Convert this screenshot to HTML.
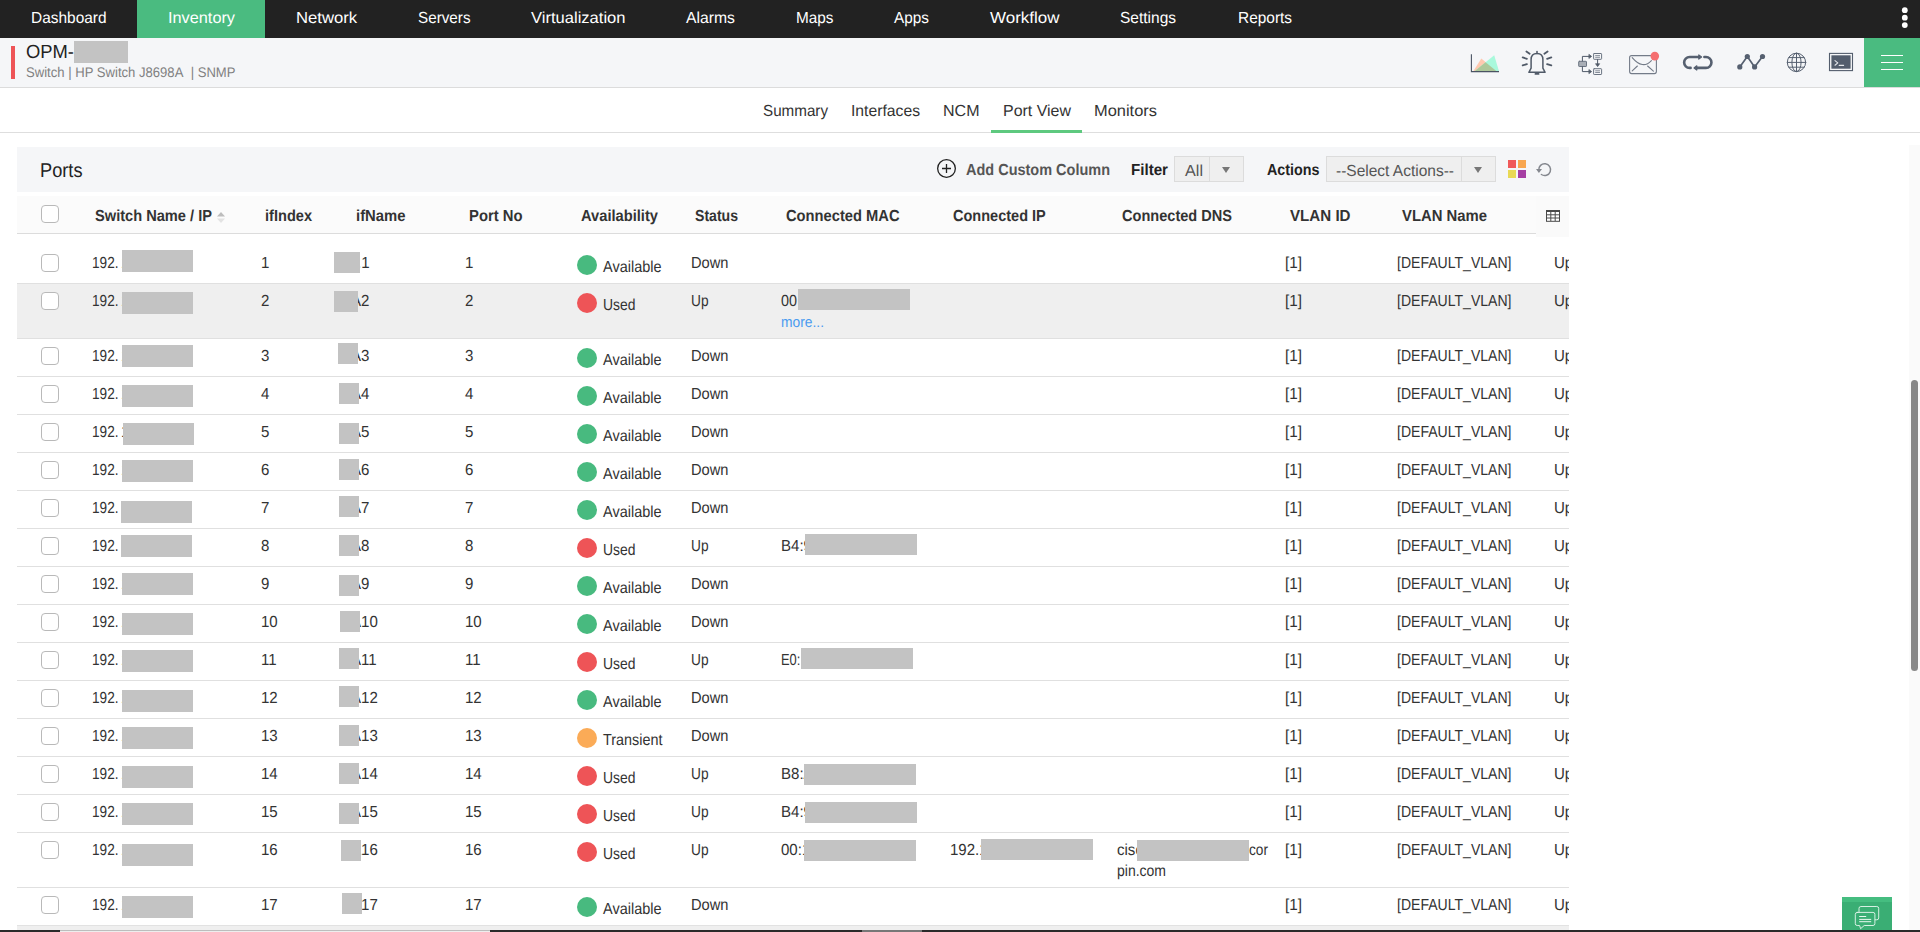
<!DOCTYPE html>
<html lang="en">
<head>
<meta charset="utf-8">
<title>OpManager - Port View</title>
<style>
html,body{margin:0;padding:0;}
body{width:1920px;height:932px;overflow:hidden;position:relative;background:#fff;
 font-family:"Liberation Sans",sans-serif;color:#333;font-size:15px;}
span,div,a,b{white-space:nowrap;}
.abs span,.abs a,.abs b{position:absolute;transform-origin:0 0;}
#topnav{position:absolute;left:0;top:0;width:1920px;height:38px;background:#222;color:#fff;}
#topnav .active{position:absolute;left:137px;top:0;width:128px;height:38px;background:#4abb80;}
#devhead{position:absolute;left:0;top:38px;width:1920px;height:49px;background:#f5f6f8;border-bottom:1px solid #dcdcdc;}
#devhead .sev{position:absolute;left:11px;top:8px;width:4px;height:33px;background:#ee5457;}
#devhead .burger{position:absolute;left:1864px;top:0;width:56px;height:49px;background:#4abb80;}
#devhead .burger i{position:absolute;left:17px;width:22px;height:1px;background:#fff;}
#tabs{position:absolute;left:0;top:88px;width:1920px;height:44px;border-bottom:1px solid #dedede;background:#fff;}
#tabs .sel{position:absolute;left:991px;top:42px;width:91px;height:3px;background:#5ec97f;}
#panel{position:absolute;left:17px;top:147px;width:1552px;height:785px;overflow:hidden;}
#phead{position:absolute;left:0;top:0;width:1552px;height:45px;background:#f5f6f8;}
#thead{position:absolute;left:0;top:49px;width:1552px;height:37px;background:#fbfbfb;}
#thead .line{position:absolute;left:0;top:37px;width:1519px;height:1px;background:#dcdcdc;}
#thead .corner{position:absolute;left:1519px;top:0;width:33px;height:41px;background:#fafafa;}
.row{position:absolute;left:0;width:1552px;border-bottom:1px solid #e0e0e0;}
.row.hl{background:#efefef;}
.cb{position:absolute;left:24px;width:16px;height:16px;border:1px solid #b9b9b9;border-radius:4px;background:#fff;}
.dot{position:absolute;left:560px;width:20px;height:20px;border-radius:50%;}
.g{background:#48ba7f;} .r{background:#ee5457;} .o{background:#fbab57;}
.mask{position:absolute;background:#c3c3c3;}
.sel-box{position:absolute;height:24px;border:1px solid #dcdcdc;background:#efefef;}
.sel-box i{position:absolute;top:0;width:1px;height:24px;background:#dcdcdc;}
.sel-box u{position:absolute;top:10px;width:0;height:0;border-left:4.5px solid transparent;border-right:4.5px solid transparent;border-top:6px solid #777;}
#vscroll{position:absolute;left:1909px;top:145px;width:11px;height:787px;background:#fafafa;}
#vscroll i{position:absolute;left:2px;top:235px;width:7px;height:291px;border-radius:4px;background:#888;}
#chat{position:absolute;left:1842px;top:897px;width:50px;height:35px;background:#3aae74;}
#foot{position:absolute;left:0;top:930px;width:1920px;height:2px;background:#2a2a2a;}
#foot i{position:absolute;top:0;height:2px;background:#cfcfcf;}
#hbar{position:absolute;left:17px;top:925px;width:1552px;height:5px;background:#efefef;border-top:1px solid #e2e2e2;box-sizing:border-box;}
svg{position:absolute;overflow:visible;}
</style>
</head>
<body>

<div id="topnav" class="abs"><div class="active"></div>
<span style="left:31.00px;top:8.00px;font-size:16px;line-height:20px;transform:matrix(0.9649,0,0.0005,1,0,0);color:#fff;">Dashboard</span>
<span style="left:168.00px;top:8.00px;font-size:16px;line-height:20px;transform:matrix(1.0180,0,0.0005,1,0,0);color:#fff;">Inventory</span>
<span style="left:295.75px;top:8.00px;font-size:16px;line-height:20px;transform:matrix(1.0426,0,0.0005,1,0,0);color:#fff;">Network</span>
<span style="left:417.50px;top:8.00px;font-size:16px;line-height:20px;transform:matrix(0.9524,0,0.0005,1,0,0);color:#fff;">Servers</span>
<span style="left:530.50px;top:8.00px;font-size:16px;line-height:20px;transform:matrix(1.0349,0,0.0005,1,0,0);color:#fff;">Virtualization</span>
<span style="left:685.50px;top:8.00px;font-size:16px;line-height:20px;transform:matrix(0.9837,0,0.0005,1,0,0);color:#fff;">Alarms</span>
<span style="left:795.50px;top:8.00px;font-size:16px;line-height:20px;transform:matrix(0.9585,0,0.0005,1,0,0);color:#fff;">Maps</span>
<span style="left:894.00px;top:8.00px;font-size:16px;line-height:20px;transform:matrix(0.9589,0,0.0005,1,0,0);color:#fff;">Apps</span>
<span style="left:990.00px;top:8.00px;font-size:16px;line-height:20px;transform:matrix(1.0601,0,0.0005,1,0,0);color:#fff;">Workflow</span>
<span style="left:1120.00px;top:8.00px;font-size:16px;line-height:20px;transform:matrix(0.9686,0,0.0005,1,0,0);color:#fff;">Settings</span>
<span style="left:1237.50px;top:8.00px;font-size:16px;line-height:20px;transform:matrix(0.9643,0,0.0005,1,0,0);color:#fff;">Reports</span>
<svg style="left:1900px;top:6px" width="10" height="24" viewBox="0 0 10 24"><circle cx="4.8" cy="4.2" r="2.9" fill="#fff"/><circle cx="4.8" cy="11.7" r="2.9" fill="#fff"/><circle cx="4.8" cy="19.1" r="2.9" fill="#fff"/></svg>
</div>
<div id="devhead" class="abs"><div class="sev"></div>
<span style="left:26.00px;top:2.00px;font-size:19px;line-height:24px;transform:matrix(0.9673,0,0.0005,1,0,0);color:#222;">OPM-</span>
<div class="mask" style="left:74px;top:3px;width:54px;height:22px"></div>
<span style="left:26.00px;top:25.00px;font-size:14px;line-height:18px;transform:matrix(0.9347,0,0.0005,1,0,0);color:#808080;">Switch | HP Switch J8698A&nbsp; | SNMP</span>
<svg style="left:1460px;top:0" width="400" height="49" viewBox="1460 38 400 49" fill="none" stroke-linecap="round" stroke-linejoin="round">
<!-- performance chart -->
<path d="M1473.3 71.2L1481.3 58.6L1496.6 71.2z" fill="#ffc9b0"/>
<path d="M1474.6 71.2L1494.2 55.2L1499 71.2z" fill="#a9f9dc"/>
<path d="M1474.6 71.2L1485.6 62.2L1496.6 71.2z" fill="#adc89a"/>
<path d="M1471.4 54.2V71.6H1499" stroke="#4a5363" stroke-width="1.1" stroke-linecap="butt" stroke-linejoin="miter"/>
<!-- alarm bell -->
<g stroke="#505a68" stroke-width="1.5">
<path d="M1537 51.6V53.4"/>
<path d="M1528.9 72.3H1545.1L1542.9 68.2V59.6C1542.9 55.6 1540.6 53.5 1537 53.5C1533.4 53.5 1531.1 55.6 1531.1 59.6V68.2z"/>
<path d="M1535.4 73.9H1538.6" stroke-width="1.7"/>
<path stroke-width="1.8" d="M1526.4 51.5L1529.6 53.8M1522.7 57.4L1526.9 58.8M1522.7 65.4L1526.9 64.1M1547.6 51.5L1544.4 53.8M1551.3 57.4L1547.1 58.8M1551.3 65.4L1547.1 64.1"/>
</g>
<!-- workflow -->
<g stroke="#6b7482" stroke-width="1">
<rect x="1578.7" y="61.3" width="7.8" height="5.2" rx="0.6" fill="#a9aeb6"/>
<rect x="1593.6" y="53.5" width="8" height="5.8" rx="0.6"/>
<rect x="1593.6" y="68.7" width="8" height="5.8" rx="0.6"/>
<path d="M1595.6 55.6h4M1595.6 57.3h4M1595.6 70.8h4M1595.6 72.5h4" stroke-width="0.8"/>
</g>
<g stroke="#505a68" stroke-width="1">
<path d="M1582.4 61V56.4H1590M1582.4 66.8V71.6H1590M1597.6 59.6V65"/>
<path d="M1589.2 54.6L1591.6 56.4L1589.2 58.2zM1589.2 69.8L1591.6 71.6L1589.2 73.4zM1595.8 64L1597.6 66.6L1599.4 64z" fill="#505a68" stroke-width="0.8"/>
</g>
<!-- mail -->
<g stroke="#737b88" stroke-width="1.1">
<rect x="1629.6" y="55.6" width="26.8" height="18" rx="2"/>
<path d="M1632.2 57.6Q1642.8 70 1651.4 60.6M1632.2 70.8L1637.4 66M1653.4 71.2L1647.6 66"/>
</g>
<circle cx="1654.8" cy="56.1" r="4.3" fill="#f56e70"/>
<!-- loop -->
<g stroke="#566070" stroke-width="2.6">
<path d="M1690.6 67.9H1689.6A5.45 5.45 0 0 1 1689.6 57H1698.6"/>
<path d="M1704.4 57H1706A5.45 5.45 0 0 1 1706 67.9H1697"/>
<path d="M1698.8 54.9L1701.6 57L1698.8 59.1zM1696.8 65.8L1694 67.9L1696.8 70z" fill="#566070" stroke-width="1.2"/>
</g>
<!-- graph -->
<path d="M1739.8 66.9L1747.3 56.5L1754.6 66.9L1762.5 56.5" stroke="#566070" stroke-width="1.7"/>
<g fill="#566070"><circle cx="1739.8" cy="66.9" r="2.6"/><circle cx="1747.3" cy="56.5" r="2.6"/><circle cx="1754.6" cy="66.9" r="2.6"/><circle cx="1762.5" cy="56.5" r="2.6"/></g>
<!-- globe -->
<g stroke="#566070" stroke-width="1">
<circle cx="1796.5" cy="62.4" r="9.2"/>
<ellipse cx="1796.5" cy="62.4" rx="4.6" ry="9.2"/>
<path d="M1796.5 53.2V71.6M1787.3 62.4H1805.7M1788.8 57.6H1804.2M1788.8 67.2H1804.2"/>
</g>
<!-- terminal -->
<rect x="1829.5" y="53.4" width="23" height="17.2" stroke="#535d6d" stroke-width="1.1" stroke-linejoin="miter"/>
<rect x="1831.4" y="55.3" width="19.2" height="13.4" fill="#535d6d"/>
<path d="M1835 60.6L1837.8 62.9L1835 65.2M1839.2 65.4H1843.6" stroke="#e4e6ea" stroke-width="1.1"/>
</svg>

<div class="burger"><i style="top:17px"></i><i style="top:24px"></i><i style="top:31px"></i></div>
</div>
<div id="tabs" class="abs">
<span style="left:763.00px;top:13.00px;font-size:16px;line-height:20px;transform:matrix(0.9498,0,0.0005,1,0,0);color:#333;">Summary</span>
<span style="left:851.00px;top:13.00px;font-size:16px;line-height:20px;transform:matrix(0.9822,0,0.0005,1,0,0);color:#333;">Interfaces</span>
<span style="left:943.00px;top:13.00px;font-size:16px;line-height:20px;transform:matrix(1.0017,0,0.0005,1,0,0);color:#333;">NCM</span>
<span style="left:1003.00px;top:13.00px;font-size:16px;line-height:20px;transform:matrix(0.9963,0,0.0005,1,0,0);color:#333;">Port View</span>
<span style="left:1094.00px;top:13.00px;font-size:16px;line-height:20px;transform:matrix(1.0265,0,0.0005,1,0,0);color:#333;">Monitors</span>
<div class="sel"></div></div>
<div id="panel">
<div id="phead" class="abs">
<span style="left:23.00px;top:11.00px;font-size:20px;line-height:24px;transform:matrix(0.9103,0,0.0005,1,0,0);color:#222;">Ports</span>
<svg style="left:919px;top:11px" width="21" height="21" viewBox="0 0 21 21"><circle cx="10.5" cy="10.5" r="8.85" fill="none" stroke="#222" stroke-width="1.3"/><path d="M6 10.5h9M10.5 6v9" stroke="#222" stroke-width="1.3" fill="none"/></svg>
<span style="left:948.50px;top:13.00px;font-size:16px;line-height:20px;transform:matrix(0.9049,0,0.0005,1,0,0);font-weight:bold;color:#555;">Add Custom Column</span>
<span style="left:1114.00px;top:13.00px;font-size:16px;line-height:20px;transform:matrix(0.9457,0,0.0005,1,0,0);font-weight:bold;color:#222;">Filter</span>
<div class="sel-box" style="left:1157px;top:9px;width:68px"><i style="left:34px"></i><u style="left:47px"></u></div>
<span style="left:1167.50px;top:14.00px;font-size:16px;line-height:20px;transform:matrix(1.0105,0,0.0005,1,0,0);color:#555;">All</span>
<span style="left:1250.00px;top:13.00px;font-size:16px;line-height:20px;transform:matrix(0.8946,0,0.0005,1,0,0);font-weight:bold;color:#222;">Actions</span>
<div class="sel-box" style="left:1309px;top:9px;width:168px"><i style="left:134px"></i><u style="left:147px"></u></div>
<span style="left:1319.00px;top:14.00px;font-size:16px;line-height:20px;transform:matrix(0.9687,0,0.0005,1,0,0);color:#555;">--Select Actions--</span>
<svg style="left:1491px;top:13px" width="18" height="18" viewBox="0 0 18 18"><rect x="0" y="0" width="8" height="8" fill="#f0595a"/><rect x="10" y="0" width="8" height="8" fill="#f8a650"/><rect x="0" y="10" width="8" height="8" fill="#e9d956"/><rect x="10" y="10" width="8" height="8" fill="#a53fa3"/></svg>
<svg style="left:1518px;top:15px" width="18" height="16" viewBox="1535 162 18 16"><path d="M1538.8 170.2A5.9 5.9 0 1 1 1541.4 174.5" fill="none" stroke="#85888f" stroke-width="1.5" stroke-linecap="round"/><path d="M1536 169L1542 169L1538.9 172.9z" fill="#85888f"/></svg>
</div>
<div id="thead" class="abs"><div class="corner"></div><div class="line"></div>
<div class="cb" style="top:9px"></div>
<span style="left:78.00px;top:10.00px;font-size:16px;line-height:20px;transform:matrix(0.9136,0,0.0005,1,0,0);font-weight:bold;color:#333;">Switch Name / IP</span>
<span style="left:247.50px;top:10.00px;font-size:16px;line-height:20px;transform:matrix(0.9115,0,0.0005,1,0,0);font-weight:bold;color:#333;">ifIndex</span>
<span style="left:338.50px;top:10.00px;font-size:16px;line-height:20px;transform:matrix(0.9274,0,0.0005,1,0,0);font-weight:bold;color:#333;">ifName</span>
<span style="left:451.50px;top:10.00px;font-size:16px;line-height:20px;transform:matrix(0.9264,0,0.0005,1,0,0);font-weight:bold;color:#333;">Port No</span>
<span style="left:564.00px;top:10.00px;font-size:16px;line-height:20px;transform:matrix(0.9180,0,0.0005,1,0,0);font-weight:bold;color:#333;">Availability</span>
<span style="left:677.50px;top:10.00px;font-size:16px;line-height:20px;transform:matrix(0.8798,0,0.0005,1,0,0);font-weight:bold;color:#333;">Status</span>
<span style="left:768.50px;top:10.00px;font-size:16px;line-height:20px;transform:matrix(0.9186,0,0.0005,1,0,0);font-weight:bold;color:#333;">Connected MAC</span>
<span style="left:936.00px;top:10.00px;font-size:16px;line-height:20px;transform:matrix(0.9071,0,0.0005,1,0,0);font-weight:bold;color:#333;">Connected IP</span>
<span style="left:1104.50px;top:10.00px;font-size:16px;line-height:20px;transform:matrix(0.9100,0,0.0005,1,0,0);font-weight:bold;color:#333;">Connected DNS</span>
<span style="left:1272.50px;top:10.00px;font-size:16px;line-height:20px;transform:matrix(0.9453,0,0.0005,1,0,0);font-weight:bold;color:#333;">VLAN ID</span>
<span style="left:1384.50px;top:10.00px;font-size:16px;line-height:20px;transform:matrix(0.9283,0,0.0005,1,0,0);font-weight:bold;color:#333;">VLAN Name</span>
<svg style="left:200px;top:16px" width="8" height="11" viewBox="0 0 8 11"><path d="M0 4.6L4 0l4 4.6z" fill="#bdbdbd"/><path d="M0 6.4L4 11l4-4.6z" fill="#e3e3e3"/></svg>
<svg style="left:1529px;top:14px" width="14" height="12" viewBox="0 0 14 12"><rect x="0.5" y="1" width="13" height="10.3" fill="#fff" stroke="#4a4a4a" stroke-width="1"/><path d="M0 1h14" stroke="#4a4a4a" stroke-width="2"/><path d="M0.5 4.8h13M0.5 8h13M4.8 1v10M9.2 1v10" stroke="#4a4a4a" stroke-width="1" fill="none"/></svg>
</div>
<div class="row abs" style="top:87px;height:49px">
<div class="cb" style="top:20px"></div>
<span style="left:75.00px;top:19.00px;font-size:16px;line-height:20px;transform:matrix(0.8514,0,0.0005,1,0,0);">192.</span>
<span style="left:103.60px;top:19.00px;font-size:16px;line-height:20px;transform:matrix(0.9400,0,0.0005,1,0,0);">1</span>
<div class="mask" style="left:105px;top:16px;width:71px;height:22px"></div>
<span style="left:243.50px;top:19.00px;font-size:16px;line-height:20px;transform:matrix(0.9400,0,0.0005,1,0,0);">1</span>
<span style="left:339.82px;top:19.00px;font-size:16px;line-height:20px;transform:matrix(0.9400,0,0.0005,1,0,0);">.1</span>
<div class="mask" style="left:317px;top:18px;width:26px;height:21px"></div>
<span style="left:447.50px;top:19.00px;font-size:16px;line-height:20px;transform:matrix(0.9400,0,0.0005,1,0,0);">1</span>
<div class="dot g" style="top:21px"></div>
<span style="left:585.50px;top:23.00px;font-size:16px;line-height:20px;transform:matrix(0.9052,0,0.0005,1,0,0);">Available</span>
<span style="left:673.50px;top:19.00px;font-size:16px;line-height:20px;transform:matrix(0.9160,0,0.0005,1,0,0);">Down</span>
<span style="left:1268.00px;top:19.00px;font-size:16px;line-height:20px;transform:matrix(0.9544,0,0.0005,1,0,0);">[1]</span>
<span style="left:1380.00px;top:19.00px;font-size:16px;line-height:20px;transform:matrix(0.8778,0,0.0005,1,0,0);">[DEFAULT_VLAN]</span>
<span style="left:1537.00px;top:19.00px;font-size:16px;line-height:20px;transform:matrix(0.9400,0,0.0005,1,0,0);">Up</span>
</div>
<div class="row abs hl" style="top:137px;height:54px">
<div class="cb" style="top:8px"></div>
<span style="left:75.00px;top:7.00px;font-size:16px;line-height:20px;transform:matrix(0.8514,0,0.0005,1,0,0);">192.</span>
<span style="left:103.60px;top:7.00px;font-size:16px;line-height:20px;transform:matrix(0.9400,0,0.0005,1,0,0);">1</span>
<div class="mask" style="left:105px;top:8px;width:71px;height:22px"></div>
<span style="left:243.50px;top:7.00px;font-size:16px;line-height:20px;transform:matrix(0.9400,0,0.0005,1,0,0);">2</span>
<span style="left:333.97px;top:7.00px;font-size:16px;line-height:20px;transform:matrix(0.9400,0,0.0005,1,0,0);">A2</span>
<div class="mask" style="left:317px;top:7px;width:24px;height:21px"></div>
<span style="left:447.50px;top:7.00px;font-size:16px;line-height:20px;transform:matrix(0.9400,0,0.0005,1,0,0);">2</span>
<div class="dot r" style="top:9px"></div>
<span style="left:585.50px;top:11.00px;font-size:16px;line-height:20px;transform:matrix(0.8696,0,0.0005,1,0,0);">Used</span>
<span style="left:673.50px;top:7.00px;font-size:16px;line-height:20px;transform:matrix(0.8563,0,0.0005,1,0,0);">Up</span>
<span style="left:764.00px;top:7.00px;font-size:16px;line-height:20px;transform:matrix(0.8982,0,0.0005,1,0,0);">00</span>
<div class="mask" style="left:781px;top:5px;width:112px;height:21px"></div>
<a style="left:764.00px;top:28.00px;font-size:15px;line-height:20px;transform:matrix(0.9210,0,0.0005,1,0,0);color:#4a9bf0;">more...</a>
<span style="left:1268.00px;top:7.00px;font-size:16px;line-height:20px;transform:matrix(0.9544,0,0.0005,1,0,0);">[1]</span>
<span style="left:1380.00px;top:7.00px;font-size:16px;line-height:20px;transform:matrix(0.8778,0,0.0005,1,0,0);">[DEFAULT_VLAN]</span>
<span style="left:1537.00px;top:7.00px;font-size:16px;line-height:20px;transform:matrix(0.9400,0,0.0005,1,0,0);">Up</span>
</div>
<div class="row abs" style="top:192px;height:37px">
<div class="cb" style="top:8px"></div>
<span style="left:75.00px;top:7.00px;font-size:16px;line-height:20px;transform:matrix(0.8514,0,0.0005,1,0,0);">192.</span>
<span style="left:103.60px;top:7.00px;font-size:16px;line-height:20px;transform:matrix(0.9400,0,0.0005,1,0,0);">1</span>
<div class="mask" style="left:105px;top:6px;width:71px;height:22px"></div>
<span style="left:243.50px;top:7.00px;font-size:16px;line-height:20px;transform:matrix(0.9400,0,0.0005,1,0,0);">3</span>
<span style="left:333.97px;top:7.00px;font-size:16px;line-height:20px;transform:matrix(0.9400,0,0.0005,1,0,0);">A3</span>
<div class="mask" style="left:321px;top:4px;width:20px;height:21px"></div>
<span style="left:447.50px;top:7.00px;font-size:16px;line-height:20px;transform:matrix(0.9400,0,0.0005,1,0,0);">3</span>
<div class="dot g" style="top:9px"></div>
<span style="left:585.50px;top:11.00px;font-size:16px;line-height:20px;transform:matrix(0.9052,0,0.0005,1,0,0);">Available</span>
<span style="left:673.50px;top:7.00px;font-size:16px;line-height:20px;transform:matrix(0.9160,0,0.0005,1,0,0);">Down</span>
<span style="left:1268.00px;top:7.00px;font-size:16px;line-height:20px;transform:matrix(0.9544,0,0.0005,1,0,0);">[1]</span>
<span style="left:1380.00px;top:7.00px;font-size:16px;line-height:20px;transform:matrix(0.8778,0,0.0005,1,0,0);">[DEFAULT_VLAN]</span>
<span style="left:1537.00px;top:7.00px;font-size:16px;line-height:20px;transform:matrix(0.9400,0,0.0005,1,0,0);">Up</span>
</div>
<div class="row abs" style="top:230px;height:37px">
<div class="cb" style="top:8px"></div>
<span style="left:75.00px;top:7.00px;font-size:16px;line-height:20px;transform:matrix(0.8514,0,0.0005,1,0,0);">192.</span>
<span style="left:103.60px;top:7.00px;font-size:16px;line-height:20px;transform:matrix(0.9400,0,0.0005,1,0,0);">1</span>
<div class="mask" style="left:105px;top:8px;width:71px;height:22px"></div>
<span style="left:243.50px;top:7.00px;font-size:16px;line-height:20px;transform:matrix(0.9400,0,0.0005,1,0,0);">4</span>
<span style="left:333.97px;top:7.00px;font-size:16px;line-height:20px;transform:matrix(0.9400,0,0.0005,1,0,0);">A4</span>
<div class="mask" style="left:322px;top:6px;width:20px;height:21px"></div>
<span style="left:447.50px;top:7.00px;font-size:16px;line-height:20px;transform:matrix(0.9400,0,0.0005,1,0,0);">4</span>
<div class="dot g" style="top:9px"></div>
<span style="left:585.50px;top:11.00px;font-size:16px;line-height:20px;transform:matrix(0.9052,0,0.0005,1,0,0);">Available</span>
<span style="left:673.50px;top:7.00px;font-size:16px;line-height:20px;transform:matrix(0.9160,0,0.0005,1,0,0);">Down</span>
<span style="left:1268.00px;top:7.00px;font-size:16px;line-height:20px;transform:matrix(0.9544,0,0.0005,1,0,0);">[1]</span>
<span style="left:1380.00px;top:7.00px;font-size:16px;line-height:20px;transform:matrix(0.8778,0,0.0005,1,0,0);">[DEFAULT_VLAN]</span>
<span style="left:1537.00px;top:7.00px;font-size:16px;line-height:20px;transform:matrix(0.9400,0,0.0005,1,0,0);">Up</span>
</div>
<div class="row abs" style="top:268px;height:37px">
<div class="cb" style="top:8px"></div>
<span style="left:75.00px;top:7.00px;font-size:16px;line-height:20px;transform:matrix(0.8514,0,0.0005,1,0,0);">192.</span>
<span style="left:103.60px;top:7.00px;font-size:16px;line-height:20px;transform:matrix(0.9400,0,0.0005,1,0,0);">1</span>
<div class="mask" style="left:106px;top:8px;width:71px;height:22px"></div>
<span style="left:243.50px;top:7.00px;font-size:16px;line-height:20px;transform:matrix(0.9400,0,0.0005,1,0,0);">5</span>
<span style="left:333.97px;top:7.00px;font-size:16px;line-height:20px;transform:matrix(0.9400,0,0.0005,1,0,0);">A5</span>
<div class="mask" style="left:322px;top:8px;width:20px;height:21px"></div>
<span style="left:447.50px;top:7.00px;font-size:16px;line-height:20px;transform:matrix(0.9400,0,0.0005,1,0,0);">5</span>
<div class="dot g" style="top:9px"></div>
<span style="left:585.50px;top:11.00px;font-size:16px;line-height:20px;transform:matrix(0.9052,0,0.0005,1,0,0);">Available</span>
<span style="left:673.50px;top:7.00px;font-size:16px;line-height:20px;transform:matrix(0.9160,0,0.0005,1,0,0);">Down</span>
<span style="left:1268.00px;top:7.00px;font-size:16px;line-height:20px;transform:matrix(0.9544,0,0.0005,1,0,0);">[1]</span>
<span style="left:1380.00px;top:7.00px;font-size:16px;line-height:20px;transform:matrix(0.8778,0,0.0005,1,0,0);">[DEFAULT_VLAN]</span>
<span style="left:1537.00px;top:7.00px;font-size:16px;line-height:20px;transform:matrix(0.9400,0,0.0005,1,0,0);">Up</span>
</div>
<div class="row abs" style="top:306px;height:37px">
<div class="cb" style="top:8px"></div>
<span style="left:75.00px;top:7.00px;font-size:16px;line-height:20px;transform:matrix(0.8514,0,0.0005,1,0,0);">192.</span>
<span style="left:103.60px;top:7.00px;font-size:16px;line-height:20px;transform:matrix(0.9400,0,0.0005,1,0,0);">1</span>
<div class="mask" style="left:105px;top:7px;width:71px;height:22px"></div>
<span style="left:243.50px;top:7.00px;font-size:16px;line-height:20px;transform:matrix(0.9400,0,0.0005,1,0,0);">6</span>
<span style="left:333.97px;top:7.00px;font-size:16px;line-height:20px;transform:matrix(0.9400,0,0.0005,1,0,0);">A6</span>
<div class="mask" style="left:322px;top:6px;width:20px;height:21px"></div>
<span style="left:447.50px;top:7.00px;font-size:16px;line-height:20px;transform:matrix(0.9400,0,0.0005,1,0,0);">6</span>
<div class="dot g" style="top:9px"></div>
<span style="left:585.50px;top:11.00px;font-size:16px;line-height:20px;transform:matrix(0.9052,0,0.0005,1,0,0);">Available</span>
<span style="left:673.50px;top:7.00px;font-size:16px;line-height:20px;transform:matrix(0.9160,0,0.0005,1,0,0);">Down</span>
<span style="left:1268.00px;top:7.00px;font-size:16px;line-height:20px;transform:matrix(0.9544,0,0.0005,1,0,0);">[1]</span>
<span style="left:1380.00px;top:7.00px;font-size:16px;line-height:20px;transform:matrix(0.8778,0,0.0005,1,0,0);">[DEFAULT_VLAN]</span>
<span style="left:1537.00px;top:7.00px;font-size:16px;line-height:20px;transform:matrix(0.9400,0,0.0005,1,0,0);">Up</span>
</div>
<div class="row abs" style="top:344px;height:37px">
<div class="cb" style="top:8px"></div>
<span style="left:75.00px;top:7.00px;font-size:16px;line-height:20px;transform:matrix(0.8514,0,0.0005,1,0,0);">192.</span>
<span style="left:103.60px;top:7.00px;font-size:16px;line-height:20px;transform:matrix(0.9400,0,0.0005,1,0,0);">1</span>
<div class="mask" style="left:104px;top:10px;width:71px;height:22px"></div>
<span style="left:243.50px;top:7.00px;font-size:16px;line-height:20px;transform:matrix(0.9400,0,0.0005,1,0,0);">7</span>
<span style="left:333.97px;top:7.00px;font-size:16px;line-height:20px;transform:matrix(0.9400,0,0.0005,1,0,0);">A7</span>
<div class="mask" style="left:322px;top:5px;width:20px;height:21px"></div>
<span style="left:447.50px;top:7.00px;font-size:16px;line-height:20px;transform:matrix(0.9400,0,0.0005,1,0,0);">7</span>
<div class="dot g" style="top:9px"></div>
<span style="left:585.50px;top:11.00px;font-size:16px;line-height:20px;transform:matrix(0.9052,0,0.0005,1,0,0);">Available</span>
<span style="left:673.50px;top:7.00px;font-size:16px;line-height:20px;transform:matrix(0.9160,0,0.0005,1,0,0);">Down</span>
<span style="left:1268.00px;top:7.00px;font-size:16px;line-height:20px;transform:matrix(0.9544,0,0.0005,1,0,0);">[1]</span>
<span style="left:1380.00px;top:7.00px;font-size:16px;line-height:20px;transform:matrix(0.8778,0,0.0005,1,0,0);">[DEFAULT_VLAN]</span>
<span style="left:1537.00px;top:7.00px;font-size:16px;line-height:20px;transform:matrix(0.9400,0,0.0005,1,0,0);">Up</span>
</div>
<div class="row abs" style="top:382px;height:37px">
<div class="cb" style="top:8px"></div>
<span style="left:75.00px;top:7.00px;font-size:16px;line-height:20px;transform:matrix(0.8514,0,0.0005,1,0,0);">192.</span>
<span style="left:103.60px;top:7.00px;font-size:16px;line-height:20px;transform:matrix(0.9400,0,0.0005,1,0,0);">1</span>
<div class="mask" style="left:104px;top:6px;width:71px;height:22px"></div>
<span style="left:243.50px;top:7.00px;font-size:16px;line-height:20px;transform:matrix(0.9400,0,0.0005,1,0,0);">8</span>
<span style="left:333.97px;top:7.00px;font-size:16px;line-height:20px;transform:matrix(0.9400,0,0.0005,1,0,0);">A8</span>
<div class="mask" style="left:322px;top:6px;width:20px;height:21px"></div>
<span style="left:447.50px;top:7.00px;font-size:16px;line-height:20px;transform:matrix(0.9400,0,0.0005,1,0,0);">8</span>
<div class="dot r" style="top:9px"></div>
<span style="left:585.50px;top:11.00px;font-size:16px;line-height:20px;transform:matrix(0.8696,0,0.0005,1,0,0);">Used</span>
<span style="left:673.50px;top:7.00px;font-size:16px;line-height:20px;transform:matrix(0.8563,0,0.0005,1,0,0);">Up</span>
<span style="left:764.00px;top:7.00px;font-size:16px;line-height:20px;transform:matrix(0.9400,0,0.0005,1,0,0);">B4:9</span>
<div class="mask" style="left:788px;top:5px;width:112px;height:21px"></div>
<span style="left:1268.00px;top:7.00px;font-size:16px;line-height:20px;transform:matrix(0.9544,0,0.0005,1,0,0);">[1]</span>
<span style="left:1380.00px;top:7.00px;font-size:16px;line-height:20px;transform:matrix(0.8778,0,0.0005,1,0,0);">[DEFAULT_VLAN]</span>
<span style="left:1537.00px;top:7.00px;font-size:16px;line-height:20px;transform:matrix(0.9400,0,0.0005,1,0,0);">Up</span>
</div>
<div class="row abs" style="top:420px;height:37px">
<div class="cb" style="top:8px"></div>
<span style="left:75.00px;top:7.00px;font-size:16px;line-height:20px;transform:matrix(0.8514,0,0.0005,1,0,0);">192.</span>
<span style="left:103.60px;top:7.00px;font-size:16px;line-height:20px;transform:matrix(0.9400,0,0.0005,1,0,0);">1</span>
<div class="mask" style="left:105px;top:6px;width:71px;height:22px"></div>
<span style="left:243.50px;top:7.00px;font-size:16px;line-height:20px;transform:matrix(0.9400,0,0.0005,1,0,0);">9</span>
<span style="left:333.97px;top:7.00px;font-size:16px;line-height:20px;transform:matrix(0.9400,0,0.0005,1,0,0);">A9</span>
<div class="mask" style="left:322px;top:8px;width:20px;height:21px"></div>
<span style="left:447.50px;top:7.00px;font-size:16px;line-height:20px;transform:matrix(0.9400,0,0.0005,1,0,0);">9</span>
<div class="dot g" style="top:9px"></div>
<span style="left:585.50px;top:11.00px;font-size:16px;line-height:20px;transform:matrix(0.9052,0,0.0005,1,0,0);">Available</span>
<span style="left:673.50px;top:7.00px;font-size:16px;line-height:20px;transform:matrix(0.9160,0,0.0005,1,0,0);">Down</span>
<span style="left:1268.00px;top:7.00px;font-size:16px;line-height:20px;transform:matrix(0.9544,0,0.0005,1,0,0);">[1]</span>
<span style="left:1380.00px;top:7.00px;font-size:16px;line-height:20px;transform:matrix(0.8778,0,0.0005,1,0,0);">[DEFAULT_VLAN]</span>
<span style="left:1537.00px;top:7.00px;font-size:16px;line-height:20px;transform:matrix(0.9400,0,0.0005,1,0,0);">Up</span>
</div>
<div class="row abs" style="top:458px;height:37px">
<div class="cb" style="top:8px"></div>
<span style="left:75.00px;top:7.00px;font-size:16px;line-height:20px;transform:matrix(0.8514,0,0.0005,1,0,0);">192.</span>
<span style="left:103.60px;top:7.00px;font-size:16px;line-height:20px;transform:matrix(0.9400,0,0.0005,1,0,0);">1</span>
<div class="mask" style="left:105px;top:8px;width:71px;height:22px"></div>
<span style="left:243.50px;top:7.00px;font-size:16px;line-height:20px;transform:matrix(0.9400,0,0.0005,1,0,0);">10</span>
<span style="left:333.97px;top:7.00px;font-size:16px;line-height:20px;transform:matrix(0.9400,0,0.0005,1,0,0);">A10</span>
<div class="mask" style="left:323px;top:6px;width:20px;height:21px"></div>
<span style="left:447.50px;top:7.00px;font-size:16px;line-height:20px;transform:matrix(0.9400,0,0.0005,1,0,0);">10</span>
<div class="dot g" style="top:9px"></div>
<span style="left:585.50px;top:11.00px;font-size:16px;line-height:20px;transform:matrix(0.9052,0,0.0005,1,0,0);">Available</span>
<span style="left:673.50px;top:7.00px;font-size:16px;line-height:20px;transform:matrix(0.9160,0,0.0005,1,0,0);">Down</span>
<span style="left:1268.00px;top:7.00px;font-size:16px;line-height:20px;transform:matrix(0.9544,0,0.0005,1,0,0);">[1]</span>
<span style="left:1380.00px;top:7.00px;font-size:16px;line-height:20px;transform:matrix(0.8778,0,0.0005,1,0,0);">[DEFAULT_VLAN]</span>
<span style="left:1537.00px;top:7.00px;font-size:16px;line-height:20px;transform:matrix(0.9400,0,0.0005,1,0,0);">Up</span>
</div>
<div class="row abs" style="top:496px;height:37px">
<div class="cb" style="top:8px"></div>
<span style="left:75.00px;top:7.00px;font-size:16px;line-height:20px;transform:matrix(0.8514,0,0.0005,1,0,0);">192.</span>
<span style="left:103.60px;top:7.00px;font-size:16px;line-height:20px;transform:matrix(0.9400,0,0.0005,1,0,0);">1</span>
<div class="mask" style="left:105px;top:7px;width:71px;height:22px"></div>
<span style="left:243.50px;top:7.00px;font-size:16px;line-height:20px;transform:matrix(0.9400,0,0.0005,1,0,0);">11</span>
<span style="left:333.97px;top:7.00px;font-size:16px;line-height:20px;transform:matrix(0.9400,0,0.0005,1,0,0);">A11</span>
<div class="mask" style="left:322px;top:5px;width:20px;height:21px"></div>
<span style="left:447.50px;top:7.00px;font-size:16px;line-height:20px;transform:matrix(0.9400,0,0.0005,1,0,0);">11</span>
<div class="dot r" style="top:9px"></div>
<span style="left:585.50px;top:11.00px;font-size:16px;line-height:20px;transform:matrix(0.8696,0,0.0005,1,0,0);">Used</span>
<span style="left:673.50px;top:7.00px;font-size:16px;line-height:20px;transform:matrix(0.8563,0,0.0005,1,0,0);">Up</span>
<span style="left:764.00px;top:7.00px;font-size:16px;line-height:20px;transform:matrix(0.8042,0,0.0005,1,0,0);">E0:</span>
<div class="mask" style="left:784px;top:5px;width:112px;height:21px"></div>
<span style="left:1268.00px;top:7.00px;font-size:16px;line-height:20px;transform:matrix(0.9544,0,0.0005,1,0,0);">[1]</span>
<span style="left:1380.00px;top:7.00px;font-size:16px;line-height:20px;transform:matrix(0.8778,0,0.0005,1,0,0);">[DEFAULT_VLAN]</span>
<span style="left:1537.00px;top:7.00px;font-size:16px;line-height:20px;transform:matrix(0.9400,0,0.0005,1,0,0);">Up</span>
</div>
<div class="row abs" style="top:534px;height:37px">
<div class="cb" style="top:8px"></div>
<span style="left:75.00px;top:7.00px;font-size:16px;line-height:20px;transform:matrix(0.8514,0,0.0005,1,0,0);">192.</span>
<span style="left:103.60px;top:7.00px;font-size:16px;line-height:20px;transform:matrix(0.9400,0,0.0005,1,0,0);">1</span>
<div class="mask" style="left:105px;top:9px;width:71px;height:22px"></div>
<span style="left:243.50px;top:7.00px;font-size:16px;line-height:20px;transform:matrix(0.9400,0,0.0005,1,0,0);">12</span>
<span style="left:333.97px;top:7.00px;font-size:16px;line-height:20px;transform:matrix(0.9400,0,0.0005,1,0,0);">A12</span>
<div class="mask" style="left:322px;top:5px;width:20px;height:21px"></div>
<span style="left:447.50px;top:7.00px;font-size:16px;line-height:20px;transform:matrix(0.9400,0,0.0005,1,0,0);">12</span>
<div class="dot g" style="top:9px"></div>
<span style="left:585.50px;top:11.00px;font-size:16px;line-height:20px;transform:matrix(0.9052,0,0.0005,1,0,0);">Available</span>
<span style="left:673.50px;top:7.00px;font-size:16px;line-height:20px;transform:matrix(0.9160,0,0.0005,1,0,0);">Down</span>
<span style="left:1268.00px;top:7.00px;font-size:16px;line-height:20px;transform:matrix(0.9544,0,0.0005,1,0,0);">[1]</span>
<span style="left:1380.00px;top:7.00px;font-size:16px;line-height:20px;transform:matrix(0.8778,0,0.0005,1,0,0);">[DEFAULT_VLAN]</span>
<span style="left:1537.00px;top:7.00px;font-size:16px;line-height:20px;transform:matrix(0.9400,0,0.0005,1,0,0);">Up</span>
</div>
<div class="row abs" style="top:572px;height:37px">
<div class="cb" style="top:8px"></div>
<span style="left:75.00px;top:7.00px;font-size:16px;line-height:20px;transform:matrix(0.8514,0,0.0005,1,0,0);">192.</span>
<span style="left:103.60px;top:7.00px;font-size:16px;line-height:20px;transform:matrix(0.9400,0,0.0005,1,0,0);">1</span>
<div class="mask" style="left:105px;top:8px;width:71px;height:22px"></div>
<span style="left:243.50px;top:7.00px;font-size:16px;line-height:20px;transform:matrix(0.9400,0,0.0005,1,0,0);">13</span>
<span style="left:333.97px;top:7.00px;font-size:16px;line-height:20px;transform:matrix(0.9400,0,0.0005,1,0,0);">A13</span>
<div class="mask" style="left:322px;top:6px;width:20px;height:21px"></div>
<span style="left:447.50px;top:7.00px;font-size:16px;line-height:20px;transform:matrix(0.9400,0,0.0005,1,0,0);">13</span>
<div class="dot o" style="top:9px"></div>
<span style="left:585.50px;top:11.00px;font-size:16px;line-height:20px;transform:matrix(0.8998,0,0.0005,1,0,0);">Transient</span>
<span style="left:673.50px;top:7.00px;font-size:16px;line-height:20px;transform:matrix(0.9160,0,0.0005,1,0,0);">Down</span>
<span style="left:1268.00px;top:7.00px;font-size:16px;line-height:20px;transform:matrix(0.9544,0,0.0005,1,0,0);">[1]</span>
<span style="left:1380.00px;top:7.00px;font-size:16px;line-height:20px;transform:matrix(0.8778,0,0.0005,1,0,0);">[DEFAULT_VLAN]</span>
<span style="left:1537.00px;top:7.00px;font-size:16px;line-height:20px;transform:matrix(0.9400,0,0.0005,1,0,0);">Up</span>
</div>
<div class="row abs" style="top:610px;height:37px">
<div class="cb" style="top:8px"></div>
<span style="left:75.00px;top:7.00px;font-size:16px;line-height:20px;transform:matrix(0.8514,0,0.0005,1,0,0);">192.</span>
<span style="left:103.60px;top:7.00px;font-size:16px;line-height:20px;transform:matrix(0.9400,0,0.0005,1,0,0);">1</span>
<div class="mask" style="left:105px;top:9px;width:71px;height:22px"></div>
<span style="left:243.50px;top:7.00px;font-size:16px;line-height:20px;transform:matrix(0.9400,0,0.0005,1,0,0);">14</span>
<span style="left:333.97px;top:7.00px;font-size:16px;line-height:20px;transform:matrix(0.9400,0,0.0005,1,0,0);">A14</span>
<div class="mask" style="left:322px;top:6px;width:20px;height:21px"></div>
<span style="left:447.50px;top:7.00px;font-size:16px;line-height:20px;transform:matrix(0.9400,0,0.0005,1,0,0);">14</span>
<div class="dot r" style="top:9px"></div>
<span style="left:585.50px;top:11.00px;font-size:16px;line-height:20px;transform:matrix(0.8696,0,0.0005,1,0,0);">Used</span>
<span style="left:673.50px;top:7.00px;font-size:16px;line-height:20px;transform:matrix(0.8563,0,0.0005,1,0,0);">Up</span>
<span style="left:764.00px;top:7.00px;font-size:16px;line-height:20px;transform:matrix(0.9400,0,0.0005,1,0,0);">B8:A</span>
<div class="mask" style="left:787px;top:7px;width:112px;height:21px"></div>
<span style="left:1268.00px;top:7.00px;font-size:16px;line-height:20px;transform:matrix(0.9544,0,0.0005,1,0,0);">[1]</span>
<span style="left:1380.00px;top:7.00px;font-size:16px;line-height:20px;transform:matrix(0.8778,0,0.0005,1,0,0);">[DEFAULT_VLAN]</span>
<span style="left:1537.00px;top:7.00px;font-size:16px;line-height:20px;transform:matrix(0.9400,0,0.0005,1,0,0);">Up</span>
</div>
<div class="row abs" style="top:648px;height:37px">
<div class="cb" style="top:8px"></div>
<span style="left:75.00px;top:7.00px;font-size:16px;line-height:20px;transform:matrix(0.8514,0,0.0005,1,0,0);">192.</span>
<span style="left:103.60px;top:7.00px;font-size:16px;line-height:20px;transform:matrix(0.9400,0,0.0005,1,0,0);">1</span>
<div class="mask" style="left:105px;top:8px;width:71px;height:22px"></div>
<span style="left:243.50px;top:7.00px;font-size:16px;line-height:20px;transform:matrix(0.9400,0,0.0005,1,0,0);">15</span>
<span style="left:333.97px;top:7.00px;font-size:16px;line-height:20px;transform:matrix(0.9400,0,0.0005,1,0,0);">A15</span>
<div class="mask" style="left:322px;top:8px;width:20px;height:21px"></div>
<span style="left:447.50px;top:7.00px;font-size:16px;line-height:20px;transform:matrix(0.9400,0,0.0005,1,0,0);">15</span>
<div class="dot r" style="top:9px"></div>
<span style="left:585.50px;top:11.00px;font-size:16px;line-height:20px;transform:matrix(0.8696,0,0.0005,1,0,0);">Used</span>
<span style="left:673.50px;top:7.00px;font-size:16px;line-height:20px;transform:matrix(0.8563,0,0.0005,1,0,0);">Up</span>
<span style="left:764.00px;top:7.00px;font-size:16px;line-height:20px;transform:matrix(0.9400,0,0.0005,1,0,0);">B4:9</span>
<div class="mask" style="left:788px;top:7px;width:112px;height:21px"></div>
<span style="left:1268.00px;top:7.00px;font-size:16px;line-height:20px;transform:matrix(0.9544,0,0.0005,1,0,0);">[1]</span>
<span style="left:1380.00px;top:7.00px;font-size:16px;line-height:20px;transform:matrix(0.8778,0,0.0005,1,0,0);">[DEFAULT_VLAN]</span>
<span style="left:1537.00px;top:7.00px;font-size:16px;line-height:20px;transform:matrix(0.9400,0,0.0005,1,0,0);">Up</span>
</div>
<div class="row abs" style="top:686px;height:54px">
<div class="cb" style="top:8px"></div>
<span style="left:75.00px;top:7.00px;font-size:16px;line-height:20px;transform:matrix(0.8514,0,0.0005,1,0,0);">192.</span>
<span style="left:103.60px;top:7.00px;font-size:16px;line-height:20px;transform:matrix(0.9400,0,0.0005,1,0,0);">1</span>
<div class="mask" style="left:105px;top:11px;width:71px;height:22px"></div>
<span style="left:243.50px;top:7.00px;font-size:16px;line-height:20px;transform:matrix(0.9400,0,0.0005,1,0,0);">16</span>
<span style="left:333.97px;top:7.00px;font-size:16px;line-height:20px;transform:matrix(0.9400,0,0.0005,1,0,0);">A16</span>
<div class="mask" style="left:324px;top:7px;width:20px;height:21px"></div>
<span style="left:447.50px;top:7.00px;font-size:16px;line-height:20px;transform:matrix(0.9400,0,0.0005,1,0,0);">16</span>
<div class="dot r" style="top:9px"></div>
<span style="left:585.50px;top:11.00px;font-size:16px;line-height:20px;transform:matrix(0.8696,0,0.0005,1,0,0);">Used</span>
<span style="left:673.50px;top:7.00px;font-size:16px;line-height:20px;transform:matrix(0.8563,0,0.0005,1,0,0);">Up</span>
<span style="left:764.00px;top:7.00px;font-size:16px;line-height:20px;transform:matrix(0.9400,0,0.0005,1,0,0);">00:1</span>
<div class="mask" style="left:787px;top:7px;width:112px;height:21px"></div>
<span style="left:933.00px;top:7.00px;font-size:16px;line-height:20px;transform:matrix(0.9400,0,0.0005,1,0,0);">192.1</span>
<div class="mask" style="left:964px;top:6px;width:112px;height:21px"></div>
<span style="left:1100.00px;top:7.00px;font-size:16px;line-height:20px;transform:matrix(0.9400,0,0.0005,1,0,0);">cisco</span>
<div class="mask" style="left:1120px;top:7px;width:112px;height:21px"></div>
<span style="left:1232.00px;top:7.00px;font-size:16px;line-height:20px;transform:matrix(0.8539,0,0.0005,1,0,0);">cor</span>
<span style="left:1100.00px;top:28.00px;font-size:16px;line-height:20px;transform:matrix(0.8750,0,0.0005,1,0,0);">pin.com</span>
<span style="left:1268.00px;top:7.00px;font-size:16px;line-height:20px;transform:matrix(0.9544,0,0.0005,1,0,0);">[1]</span>
<span style="left:1380.00px;top:7.00px;font-size:16px;line-height:20px;transform:matrix(0.8778,0,0.0005,1,0,0);">[DEFAULT_VLAN]</span>
<span style="left:1537.00px;top:7.00px;font-size:16px;line-height:20px;transform:matrix(0.9400,0,0.0005,1,0,0);">Up</span>
</div>
<div class="row abs" style="top:741px;height:37px">
<div class="cb" style="top:8px"></div>
<span style="left:75.00px;top:7.00px;font-size:16px;line-height:20px;transform:matrix(0.8514,0,0.0005,1,0,0);">192.</span>
<span style="left:103.60px;top:7.00px;font-size:16px;line-height:20px;transform:matrix(0.9400,0,0.0005,1,0,0);">1</span>
<div class="mask" style="left:105px;top:8px;width:71px;height:22px"></div>
<span style="left:243.50px;top:7.00px;font-size:16px;line-height:20px;transform:matrix(0.9400,0,0.0005,1,0,0);">17</span>
<span style="left:333.97px;top:7.00px;font-size:16px;line-height:20px;transform:matrix(0.9400,0,0.0005,1,0,0);">A17</span>
<div class="mask" style="left:325px;top:5px;width:20px;height:21px"></div>
<span style="left:447.50px;top:7.00px;font-size:16px;line-height:20px;transform:matrix(0.9400,0,0.0005,1,0,0);">17</span>
<div class="dot g" style="top:9px"></div>
<span style="left:585.50px;top:11.00px;font-size:16px;line-height:20px;transform:matrix(0.9052,0,0.0005,1,0,0);">Available</span>
<span style="left:673.50px;top:7.00px;font-size:16px;line-height:20px;transform:matrix(0.9160,0,0.0005,1,0,0);">Down</span>
<span style="left:1268.00px;top:7.00px;font-size:16px;line-height:20px;transform:matrix(0.9544,0,0.0005,1,0,0);">[1]</span>
<span style="left:1380.00px;top:7.00px;font-size:16px;line-height:20px;transform:matrix(0.8778,0,0.0005,1,0,0);">[DEFAULT_VLAN]</span>
<span style="left:1537.00px;top:7.00px;font-size:16px;line-height:20px;transform:matrix(0.9400,0,0.0005,1,0,0);">Up</span>
</div>
</div>
<div id="hbar"></div>
<div id="vscroll"><i></i></div>
<div id="chat"><div style="position:absolute;left:0;top:0;width:50px;height:5px;background:#45bd80"></div><svg style="left:0;top:0" width="50" height="35" viewBox="1842 897 50 35" fill="none" stroke="#e9f7ef" stroke-width="0.9" stroke-linejoin="round" stroke-linecap="round"><path d="M1859 912.2V908.4A1.9 1.9 0 0 1 1860.9 906.5H1876.8A1.9 1.9 0 0 1 1878.7 908.4V917.9A1.9 1.9 0 0 1 1876.8 919.8H1875.2"/><path d="M1857.2 912.4H1873A1.9 1.9 0 0 1 1874.9 914.3V923.6A1.9 1.9 0 0 1 1873 925.5H1864.2L1860.6 928.7L1859.6 925.5H1857.2A1.9 1.9 0 0 1 1855.3 923.6V914.3A1.9 1.9 0 0 1 1857.2 912.4z"/><path d="M1859.6 916.5H1865.8M1859.6 919.4H1870.8M1859.6 921.7H1870.8" stroke-width="1"/></svg>
</div>
<div id="foot"><i style="left:60px;width:430px;background:linear-gradient(#bdbdbd 0,#bdbdbd 1px,#eee 1px,#eee 2px)"></i><i style="left:862px;width:60px;background:#777"></i></div>
</body>
</html>
